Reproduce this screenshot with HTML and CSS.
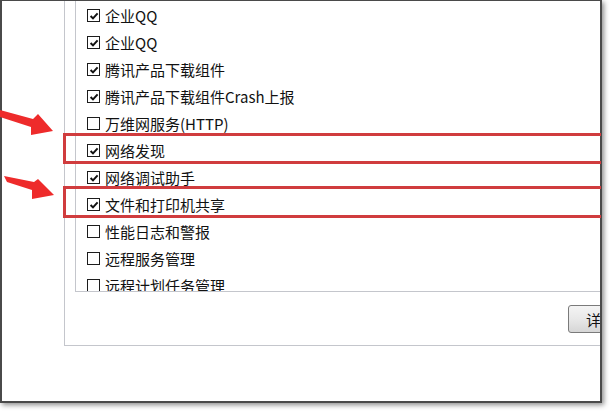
FILE: index.html
```html
<!DOCTYPE html>
<html>
<head>
    <meta charset="utf-8">
    <title>允许的应用</title>
    <link rel="stylesheet" href="styles.css">
</head>
<body>
    <div class="window">
        <div class="group">
            <div class="list">
                <div class="row"><span class="box on"></span>企业QQ</div>
                <div class="row"><span class="box on"></span>企业QQ</div>
                <div class="row"><span class="box on"></span>腾讯产品下载组件</div>
                <div class="row"><span class="box on"></span>腾讯产品下载组件Crash上报</div>
                <div class="row"><span class="box"></span>万维网服务(HTTP)</div>
                <div class="row"><span class="box on"></span>网络发现</div>
                <div class="row"><span class="box on"></span>网络调试助手</div>
                <div class="row"><span class="box on"></span>文件和打印机共享</div>
                <div class="row"><span class="box"></span>性能日志和警报</div>
                <div class="row"><span class="box"></span>远程服务管理</div>
                <div class="row"><span class="box"></span>远程计划任务管理</div>
            </div>
            <div class="actions">
                <button>详细信息(N)...</button>
            </div>
        </div>
    </div>

    <!-- annotation overlay -->
    <div class="mark mark-1"></div>
    <div class="mark mark-2"></div>
    <svg class="arrows" width="70" height="220" viewBox="0 0 70 220">
        <polygon points="0,110 33,119 38,114 53,131 31,135 31,127 0,117" />
        <polygon points="4,176 34,182 38,179 54,195 32,199 32,190 7,182" />
    </svg>
</body>
</html>
```

FILE: styles.css
```css
body {
    margin: 0;
    width: 611px;
    height: 411px;
    overflow: hidden;
    background: #fff;
    font-family: "Noto Sans CJK SC", "Noto Sans", sans-serif;
    font-size: 15px;
    color: #111;
    position: relative;
}
.window {
    box-sizing: border-box;
    width: 602px;
    height: 403px;
    border: 2px solid #4a4a4a;
    border-top-width: 1px;
    padding-left: 62px;
    background: #fff;
    overflow: hidden;
    box-shadow: 2px 2px 5px rgba(0,0,0,0.45);
}
.group {
    box-sizing: border-box;
    width: 615px;
    height: 345px;
    border-left: 1px solid #c4c6cc;
    border-bottom: 1px solid #c4c6cc;
    padding-left: 10px;
    display: flex;
    flex-direction: column;
}
.list {
    box-sizing: border-box;
    height: 291px;
    padding-top: 1px;
    border-left: 1px solid #c4c6cc;
    border-bottom: 1px solid #c4c6cc;
    overflow: hidden;
}
.row {
    height: 27px;
    display: flex;
    align-items: center;
    gap: 5px;
    padding-left: 11px;
    white-space: nowrap;
}
.box {
    box-sizing: border-box;
    width: 13px;
    height: 13px;
    border: 1.5px solid #1c1c1c;
    background: #fff no-repeat center / 10px 10px;
    flex: none;
}
.box.on {
    background-image: url("data:image/svg+xml;utf8,<svg xmlns='http://www.w3.org/2000/svg' viewBox='0 0 10 10'><path d='M1.6 5 L4 7.4 L8.6 2.4' fill='none' stroke='%23111' stroke-width='2'/></svg>");
}
.actions {
    display: flex;
    justify-content: flex-end;
    margin-top: 13px;
    padding-right: 11px;
}
button {
    width: 100px;
    height: 28px;
    padding: 0 0 0 17px;
    text-align: left;
    white-space: nowrap;
    overflow: hidden;
    font-family: inherit;
    font-size: 15px;
    color: #111;
    border: 1px solid #7a7a7a;
    border-radius: 3px;
    background: linear-gradient(#f4f4f4, #e8e8e8 50%, #d6d6d6);
}
.mark {
    position: absolute;
    left: 63px;
    width: 538px;
    box-sizing: border-box;
    border: 3px solid #d03c3e;
    border-right: none;
}
.mark-1 { top: 133px; height: 31px; }
.mark-2 { top: 186px; height: 32px; }
.arrows {
    position: absolute;
    left: 0;
    top: 0;
}
.arrows polygon { fill: #ee2b2b; }
```
